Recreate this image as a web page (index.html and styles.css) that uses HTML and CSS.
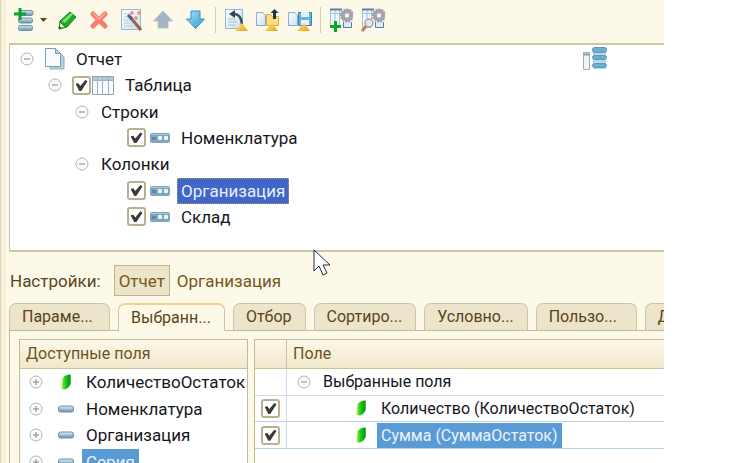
FILE: index.html
```html
<!DOCTYPE html>
<html lang="ru">
<head>
<meta charset="utf-8">
<title>Настройки отчета</title>
<link rel="stylesheet" href="styles.css">
</head>
<body>
<svg class="defs" aria-hidden="true">
  <defs>
    <linearGradient id="steel" x1="0" y1="0" x2="0" y2="1"><stop offset="0" stop-color="#dbe9f1"/><stop offset=".5" stop-color="#9dbccf"/><stop offset="1" stop-color="#648fab"/></linearGradient>
    <linearGradient id="blue" x1="0" y1="0" x2="1" y2="1"><stop offset="0" stop-color="#a8e2fa"/><stop offset="1" stop-color="#2b9bd6"/></linearGradient>
    <linearGradient id="gold" x1="0" y1="0" x2="1" y2="1"><stop offset="0" stop-color="#ffe18a"/><stop offset="1" stop-color="#e8a314"/></linearGradient>
    <linearGradient id="leaf" x1="0" y1="0" x2="1" y2="0"><stop offset="0" stop-color="#b5f04a"/><stop offset=".4" stop-color="#22cf1c"/><stop offset="1" stop-color="#079a0c"/></linearGradient>
    <linearGradient id="paper" x1="0" y1="0" x2="1" y2="1"><stop offset="0" stop-color="#ffffff"/><stop offset="1" stop-color="#c9dfec"/></linearGradient>
    <symbol id="plus" viewBox="0 0 14 14"><circle cx="7" cy="7" r="6" fill="#fafafa" stroke="#b4b4b4"/><path d="M4 7h6M7 4v6" stroke="#858585" fill="none"/></symbol>
    <symbol id="minus" viewBox="0 0 14 14"><circle cx="7" cy="7" r="6" fill="#fafafa" stroke="#b4b4b4"/><path d="M4 7h6" stroke="#858585" fill="none"/></symbol>
    <symbol id="resource" viewBox="0 0 12 18"><path d="M2.500 5 Q6 1 10.500 1.500 V11 Q9 15 5 16.500 L1.500 16z" fill="url(#leaf)"/><path d="M8 3l2.500-1.500V11L8 14z" fill="#0da211"/></symbol>
    <symbol id="dash" viewBox="0 0 16 8"><rect x=".5" y="1" width="15" height="6" rx="2" fill="url(#steel)" stroke="#6a93a9"/><path d="M3 3h10" stroke="#c4dae6"/></symbol>
    <symbol id="group" viewBox="0 0 20 10"><rect width="20" height="10" rx="2" fill="#7fa6bd"/><path d="M1 1.500h18" stroke="#a9c6d5"/><path d="M2 4h4v3H2z" fill="#5f8aa5"/><rect x="8" y="3" width="4" height="4" rx="1" fill="#eef6fa"/><rect x="14" y="3" width="4" height="4" rx="1" fill="#eef6fa"/></symbol>
    <symbol id="gridgear" viewBox="0 0 24 24"><path d="M1.500 1.500h9v18h-9z M1.500 5.500h12 M6 1.500v18" fill="#eff7fc" stroke="#a3c3d9"/><path d="M1 1.500h12" stroke="#587f9f" stroke-width="2"/><path d="M14.500 14v5.500h8V14" fill="#dcebf7" stroke="#587f9f"/><circle cx="18" cy="7.500" r="4" fill="none" stroke="#a4a6b0" stroke-width="4"/><circle cx="18" cy="7.500" r="6" fill="none" stroke="#999ca8" stroke-width="2" stroke-dasharray="2 1"/><circle cx="18" cy="7.500" r="2" fill="#f9f7ef"/></symbol>
  </defs>
</svg>

<main class="app">
  <div class="toolbar" role="toolbar" aria-label="Команды">
    <button class="tool tool-wide" aria-label="Добавить"><svg width="36" height="24" viewBox="0 0 36 24"><g fill="url(#steel)" stroke="#6b93ae"><rect x="9" y="2.500" width="13" height="5" rx="2"/><rect x="7.500" y="10" width="14" height="5" rx="2"/><rect x="7.500" y="17.500" width="14" height="5" rx="2"/></g><path d="M9 0v12M3 6h12" stroke="#0ba522" stroke-width="3"/><path d="M29 10h7l-3.500 4z" fill="#62420c"/></svg></button>
    <button class="tool" aria-label="Изменить"><svg width="24" height="24" viewBox="0 0 24 24"><path d="M4 21l1-8 10-9 6 5-9 10z" fill="#22a82b" stroke="#168322"/><path d="M7 13L16 5l2 1-8 9z" fill="#79e66f"/><path d="M4 21l1-7 5 5z" fill="#eff5df" stroke="#308430"/><path d="M4 21l.5-3 2 2z" fill="#075d12"/></svg></button>
    <button class="tool" aria-label="Удалить"><svg width="24" height="24" viewBox="0 0 24 24"><path d="M6 6l12 12M18 6L6 18" stroke="#fa7b6b" stroke-width="5" stroke-linecap="round"/><path d="M6 5l6 6 6-6" stroke="#ffa18f" stroke-width="2" fill="none"/></svg></button>
    <button class="tool" aria-label="Мастер настроек"><svg width="24" height="24" viewBox="0 0 24 24"><path d="M2.500 1.500h19v20h-19z" fill="url(#paper)" stroke="#9bb8d2"/><path d="M5 6h7M5 9h5M5 12h8M5 15h9M5 18h11" stroke="#bccdda"/><path d="M11 9l11 13" stroke="#9b6148" stroke-width="3"/><path d="M9 7l4 4" stroke="#41648c" stroke-width="3"/><path d="M13 3v4M11 5h4M20 3v4M18 5h4M17 8v4M15 10h4" stroke="#fa8780" stroke-width="1.500"/></svg></button>
    <button class="tool" aria-label="Переместить вверх"><svg width="24" height="24" viewBox="0 0 24 24"><path d="M12 3l9.500 10H17v7H7v-7H2.500z" fill="#a4b5c1" stroke="#bac5cc"/></svg></button>
    <button class="tool" aria-label="Переместить вниз"><svg width="24" height="24" viewBox="0 0 24 24"><path d="M8 3h9v8h4.500L12.500 20.500 3.500 11H8z" fill="url(#blue)" stroke="#468eb9"/></svg></button>
    <span class="separator"></span>
    <button class="tool" aria-label="Стандартные настройки"><svg width="24" height="24" viewBox="0 0 24 24"><path d="M1.500 1.500h17v19h-17z" fill="url(#paper)" stroke="#91b6d0"/><path d="M4 11h7M4 14h9M4 17h7" stroke="#a1bdd1"/><path d="M9 6q8-1 9 11" fill="none" stroke="#345263" stroke-width="2.500"/><path d="M5 6l6-4v8z" fill="#234a66"/><path d="M18 15l6 8H11z" fill="url(#gold)"/></svg></button>
    <button class="tool" aria-label="Загрузить настройки"><svg width="24" height="24" viewBox="0 0 24 24"><path d="M.5 4.500h6l3 3v10h-9z" fill="url(#paper)" stroke="#86aecb"/><path d="M10.500 6.500h4l2 2h6v9h-12z" fill="#ffdf83" stroke="#dfaa3b"/><path d="M18.500 11V4" stroke="#183848" stroke-width="3"/><path d="M14.500 5l4-4 4 4z" fill="#183848"/><path d="M16 15l6 8H9z" fill="url(#gold)"/></svg></button>
    <button class="tool" aria-label="Сохранить настройки"><svg width="24" height="24" viewBox="0 0 24 24"><path d="M.5 4.500h6l3 3v10h-9z" fill="url(#paper)" stroke="#86aecb"/><path d="M10.500 4.500h13v13h-13z" fill="#66b4dc" stroke="#3c81a7"/><path d="M13 4h8v5h-8zM13 12h8v5h-8z" fill="#e5f3fb"/><path d="M16 15l6 8H9z" fill="url(#gold)"/></svg></button>
    <span class="separator"></span>
    <button class="tool" aria-label="Добавить пользовательскую настройку"><svg width="24" height="24" viewBox="0 0 24 24"><use href="#gridgear"/><path d="M6.500 13v11M1 18.500h11" stroke="#0ca624" stroke-width="3"/></svg></button>
    <button class="tool" aria-label="Свойства настройки"><svg width="24" height="24" viewBox="0 0 24 24"><use href="#gridgear"/><path d="M6 17l-5 6" stroke="#cb795b" stroke-width="3"/><circle cx="8" cy="15" r="4" fill="#d6ebf8" stroke="#bd9ba0" stroke-width="1.500"/></svg></button>
  </div>

  <section class="structure" aria-label="Структура отчета">
    <div class="node">
      <button class="toggle" aria-label="Свернуть"><svg width="14" height="14"><use href="#minus"/></svg></button>
      <svg class="report-icon" width="20" height="22" viewBox="0 0 20 22"><path d="M5 5h10l4 4v12H5z" fill="#b8cfdd" stroke="#8fabbd"/><path d="M.5.500h10l5 5v13H.5z" fill="#f8fcff" stroke="#7f9db1"/><path d="M10.500.500v5h5z" fill="#bdd2df" stroke="#7f9db1"/></svg>
      <span class="caption">Отчет</span>
      <svg class="view-icon" width="24" height="24" viewBox="0 0 24 24"><path d="M.5 5.500h6v17h-6z" fill="#eef3f7" stroke="#9aacb9"/><path d="M.5 7.500h6" stroke="#8b9dab" stroke-width="2"/><path d="M10 4h13v18H10z" fill="#b7d9e8"/><g fill="#6caecd" stroke="#5b9bba"><rect x="9.500" y=".5" width="14" height="5" rx="2"/><rect x="9.500" y="8.500" width="14" height="4" rx="2"/><rect x="9.500" y="16.500" width="14" height="4" rx="2"/></g></svg>
    </div>
    <div class="node level-1">
      <button class="toggle" aria-label="Свернуть"><svg width="14" height="14"><use href="#minus"/></svg></button>
      <input class="check" type="checkbox" id="n-table" checked>
      <svg width="24" height="20" viewBox="0 0 24 20"><path d="M1.500 1.500h21v18h-21z" fill="#f8fbfd" stroke="#90a5b4"/><path d="M2 2h20v4H2z" fill="#b5c9d6"/><path d="M1 5.500h22M6.500 2v17M11.500 2v17M17.500 2v17" stroke="#9fb2bf"/></svg>
      <label class="caption caption-table" for="n-table">Таблица</label>
    </div>
    <div class="node level-2">
      <button class="toggle" aria-label="Свернуть"><svg width="14" height="14"><use href="#minus"/></svg></button>
      <span class="caption">Строки</span>
    </div>
    <div class="node level-3">
      <input class="check" type="checkbox" id="n-item" checked>
      <svg class="group-icon" width="20" height="10"><use href="#group"/></svg>
      <label class="caption" for="n-item">Номенклатура</label>
    </div>
    <div class="node level-2">
      <button class="toggle" aria-label="Свернуть"><svg width="14" height="14"><use href="#minus"/></svg></button>
      <span class="caption">Колонки</span>
    </div>
    <div class="node level-3">
      <input class="check" type="checkbox" id="n-org" checked>
      <svg class="group-icon" width="20" height="10"><use href="#group"/></svg>
      <label class="caption current" for="n-org">Организация</label>
    </div>
    <div class="node level-3">
      <input class="check" type="checkbox" id="n-store" checked>
      <svg class="group-icon" width="20" height="10"><use href="#group"/></svg>
      <label class="caption" for="n-store">Склад</label>
    </div>
  </section>

  <div class="scope">
    <span class="scope-title">Настройки:</span>
    <button class="scope-button pressed" aria-pressed="true">Отчет</button>
    <button class="scope-button" aria-pressed="false">Организация</button>
  </div>

  <div class="tabs" role="tablist">
    <button class="tab" role="tab">Параме...</button>
    <button class="tab active" role="tab" aria-selected="true">Выбранн...</button>
    <button class="tab short" role="tab">Отбор</button>
    <button class="tab" role="tab">Сортиро...</button>
    <button class="tab" role="tab">Условно...</button>
    <button class="tab" role="tab">Пользо...</button>
    <button class="tab" role="tab">Д...</button>
  </div>

  <div class="page" role="tabpanel">
    <section class="available">
      <h2 class="heading">Доступные поля</h2>
      <ul class="fields">
        <li class="field"><button class="toggle" aria-label="Развернуть"><svg width="14" height="14"><use href="#plus"/></svg></button><svg class="kind" width="16" height="18"><use href="#resource"/></svg><span class="caption">КоличествоОстаток</span></li>
        <li class="field"><button class="toggle" aria-label="Развернуть"><svg width="14" height="14"><use href="#plus"/></svg></button><svg class="kind" width="16" height="8"><use href="#dash"/></svg><span class="caption">Номенклатура</span></li>
        <li class="field"><button class="toggle" aria-label="Развернуть"><svg width="14" height="14"><use href="#plus"/></svg></button><svg class="kind" width="16" height="8"><use href="#dash"/></svg><span class="caption">Организация</span></li>
        <li class="field"><button class="toggle" aria-label="Развернуть"><svg width="14" height="14"><use href="#plus"/></svg></button><svg class="kind" width="16" height="8"><use href="#dash"/></svg><span class="caption marked">Серия</span></li>
      </ul>
    </section>
    <section class="selected">
      <table class="grid">
        <thead><tr><th class="mark-cell" aria-label="Использование"></th><th>Поле</th></tr></thead>
        <tbody>
          <tr><td></td><td><div class="cell"><button class="toggle" aria-label="Свернуть"><svg width="14" height="14"><use href="#minus"/></svg></button><span class="caption">Выбранные поля</span></div></td></tr>
          <tr><td><input class="check" type="checkbox" id="f-qty" checked></td><td><div class="cell nested"><svg width="12" height="18"><use href="#resource"/></svg><label class="caption" for="f-qty">Количество (КоличествоОстаток)</label></div></td></tr>
          <tr><td><input class="check" type="checkbox" id="f-sum" checked></td><td><div class="cell nested"><svg width="12" height="18"><use href="#resource"/></svg><label class="caption marked" for="f-sum">Сумма (СуммаОстаток)</label></div></td></tr>
        </tbody>
      </table>
    </section>
  </div>
</main>

<svg class="pointer" width="18" height="28" viewBox="0 0 18 28" aria-hidden="true"><path d="M1 1v21l5-5 4 9 4-2-4-8h7z" fill="#fff" stroke="#222c3c"/></svg>
</body>
</html>
```
FILE: styles.css
```css
* { box-sizing: border-box; }
body {
  margin: 0;
  height: 100vh;
  overflow: hidden;
  background: #fff;
  color: #16161c;
  font: 16px/26px Roboto, "Liberation Sans", sans-serif;
}
button, input { margin: 0; padding: 0; font: inherit; color: inherit; }
button { border: 0; background: none; }
svg { display: block; flex: none; }
.defs { position: absolute; width: 0; height: 0; }

.app {
  display: flex;
  flex-direction: column;
  height: 100vh;
  margin-right: 65px;
  padding-left: 9px;
  overflow: hidden;
  background: linear-gradient(to right, #d9d2b4 1px, #f7f1dc 1px, #f7f1dc 6px, #fdf9e9 6px);
}

.toolbar {
  display: flex;
  flex: none;
  align-items: center;
  gap: 8px;
  height: 43px;
  padding: 0 2px 4px;
}
.tool { width: 24px; height: 24px; }
.tool-wide { width: 36px; }
.separator { width: 1px; height: 26px; background: #d5cdb0; }

.structure, .scope, .fields { font-size: 17px; }

.structure {
  display: grid;
  flex: none;
  grid-template-rows: repeat(7, 1fr);
  height: 209px;
  padding: 1px 0 20px;
  border: solid #cdc7a4;
  border-width: 2px 0 2px 1px;
  background: #fff;
}
.node, .field, .cell { display: flex; align-items: center; }
.node { padding-left: 10px; }
.level-1 { padding-left: 38px; }
.level-2 { padding-left: 65px; }
.level-3 { padding-left: 117px; }
.toggle { flex: none; width: 14px; height: 14px; }
.caption { padding: 0 4px; white-space: nowrap; }
.report-icon { margin: 0 7px 0 11px; }
.view-icon { margin: 0 57px 0 auto; }
.level-1 .check { margin-left: 10px; }
.caption-table { margin-left: 6px; }
.level-2 .caption { margin-left: 8px; }
.group-icon { margin: 0 7px 0 4px; }
.current { background: #4166ca; color: #e8effc; outline: 1px dotted #a5a06c; outline-offset: -1px; }
.marked { background: #5b9bd5; color: #eaf4fd; }

.check {
  display: grid;
  flex: none;
  place-items: center;
  appearance: none;
  width: 19px;
  height: 19px;
  border: 2px solid #b9b08f;
  border-radius: 3px;
  background: #fff;
}
.check:checked::before {
  content: "";
  width: 12px;
  height: 11px;
  background: #3a3a3a;
  clip-path: polygon(0 35%, 24% 30%, 40% 55%, 82% 0, 100% 12%, 48% 100%, 32% 100%);
}

.scope {
  display: flex;
  flex: none;
  align-items: center;
  height: 51px;
  padding-top: 6px;
  color: #59451f;
}
.scope-title { margin: 0 13px 0 1px; }
.scope-button { height: 31px; padding: 0 7px; color: #76581d; }
.scope-button.pressed { padding: 0 4px; border: 1px solid #bdb58d; background: #ece5c9; }

.tabs {
  display: flex;
  flex: none;
  gap: 8px;
  height: 28px;
  border-bottom: 1px solid #c2bc95;
}
.tab {
  flex: none;
  min-width: 101px;
  height: 27px;
  padding: 0 13px 0 12px;
  border: 1px solid #ccc6a6;
  border-bottom: 0;
  border-radius: 7px 7px 0 0;
  background: #ece5cb;
  color: #5a431b;
  text-align: left;
  white-space: nowrap;
}
.tab.short { min-width: 0; }
.tab.active { height: 28px; border-top: 2px solid #f2d18d; background: #fdf9e9; }

.page {
  display: grid;
  flex: 1;
  grid-template-columns: 229px 1fr;
  gap: 6px;
  min-height: 0;
  padding: 8px 0 0 9px;
  border-left: 1px solid #c2bc95;
}
.available, .selected { min-width: 0; border: 1px solid #c2bc95; border-bottom: 0; background: #fff; }
.selected { border-right: 0; }
.heading, .grid th {
  height: 29px;
  border-bottom: 1px solid #cbc39b;
  background: linear-gradient(#faf8e8, #f1e8cb);
  color: #6d5324;
  font-size: 16px;
  font-weight: 400;
  line-height: 28px;
  text-align: left;
}
.heading { margin: 0; padding-left: 6px; }
.fields { display: grid; grid-template-rows: repeat(4, 1fr); height: 106px; margin: 0; padding: 0; list-style: none; }
.field { padding-left: 9px; }
.kind { margin: 0 8px 0 15px; }
.grid { width: 100%; height: 109px; border-collapse: separate; border-spacing: 0; }
.grid th { padding: 0 0 0 6px; }
.grid td { padding: 0 0 0 6px; border-bottom: 1px solid #b9d3ea; }
.grid tr:first-child td { border-bottom-color: #d6dde2; }
.grid th:first-child { width: 32px; border-right: 1px solid #cbc39b; }
.grid td:first-child { border-right: 1px solid #c9d9e8; }
.cell { height: 25px; padding-left: 4px; line-height: 25px; }
.cell .toggle { margin-right: 8px; }
.nested { padding-left: 62px; }
.nested .caption { margin-left: 10px; }

.pointer { position: absolute; left: 313px; top: 249px; }
```
